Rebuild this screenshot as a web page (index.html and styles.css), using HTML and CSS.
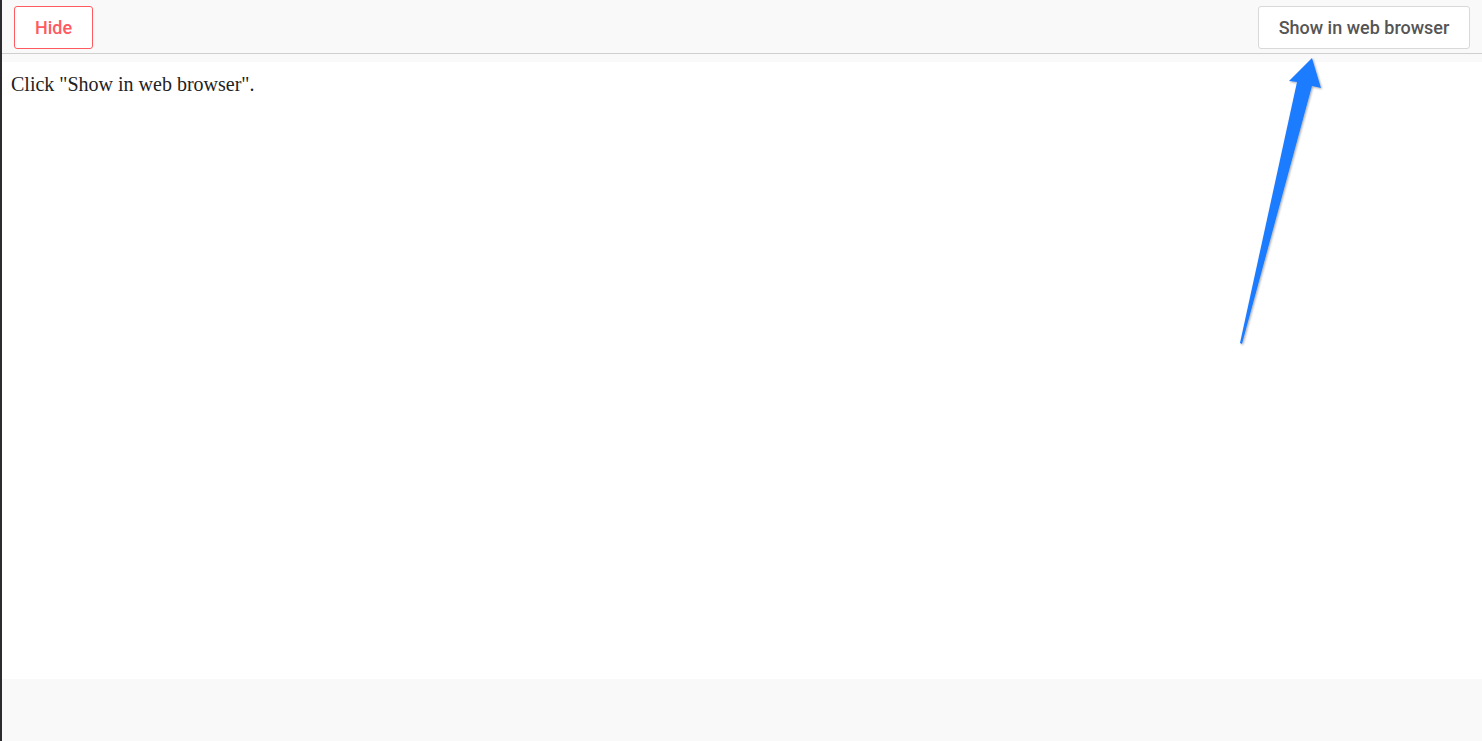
FILE: index.html
```html
<!DOCTYPE html>
<html lang="en">
<head>
  <meta charset="UTF-8" />
  <title>Preview</title>
  <link rel="stylesheet" href="styles.css">
</head>
<body>
  <div class="window">
    <div class="toolbar">
      <button type="button" class="btn btn-hide">Hide</button>
      <button type="button" class="btn btn-browser">Show in web browser</button>
    </div>
    <div class="preview">
      <div class="preview-frame">
        <p class="message">Click "Show in web browser".</p>
      </div>
    </div>
    <div class="footer"></div>
  </div>

  <svg class="pointer" width="1482" height="741" viewBox="0 0 1482 741">
    <defs>
      <filter id="shadow" x="-20%" y="-20%" width="140%" height="140%">
        <feDropShadow dx="1" dy="1" stdDeviation="1" flood-color="#000" flood-opacity="0.35"/>
      </filter>
    </defs>
    <polygon points="1312,58 1321,88 1312,86 1242,344 1240,343 1297,82 1289,81" fill="#1f7bff" filter="url(#shadow)"/>
  </svg>
</body>
</html>
```

FILE: styles.css
```css
html, body {
  margin: 0;
  height: 100%;
}

body {
  background: #2b2b30;
  overflow: hidden;
  position: relative;
}

.window {
  margin-left: 2px;
  height: 100%;
  background: #f9f9f9;
  display: flex;
  flex-direction: column;
}

.toolbar {
  height: 54px;
  box-sizing: border-box;
  border-bottom: 1px solid #cfcfcf;
  display: flex;
  justify-content: space-between;
  align-items: flex-start;
  padding: 6px 12px 0 12px;
}

.btn {
  height: 43px;
  font-family: Roboto, "Liberation Sans", sans-serif;
  font-size: 18px;
  font-weight: 500;
  background: #fff;
  border-radius: 3px;
  cursor: pointer;
  padding: 0;
}

.btn-hide {
  width: 79px;
  color: #ff5a5f;
  border: 1px solid #ff5a5f;
}

.btn-browser {
  width: 212px;
  color: #555;
  border: 1px solid #d9d9d9;
}

.preview {
  padding-top: 8px;
}

.preview-frame {
  height: 617px;
  background: #fff;
}

.message {
  margin: 0;
  padding: 11px 0 0 9px;
  font-family: "Liberation Serif", "Times New Roman", serif;
  font-size: 20px;
  color: #222;
}

.footer {
  flex: 1;
}

.pointer {
  position: absolute;
  left: 0;
  top: 0;
  pointer-events: none;
}
```
